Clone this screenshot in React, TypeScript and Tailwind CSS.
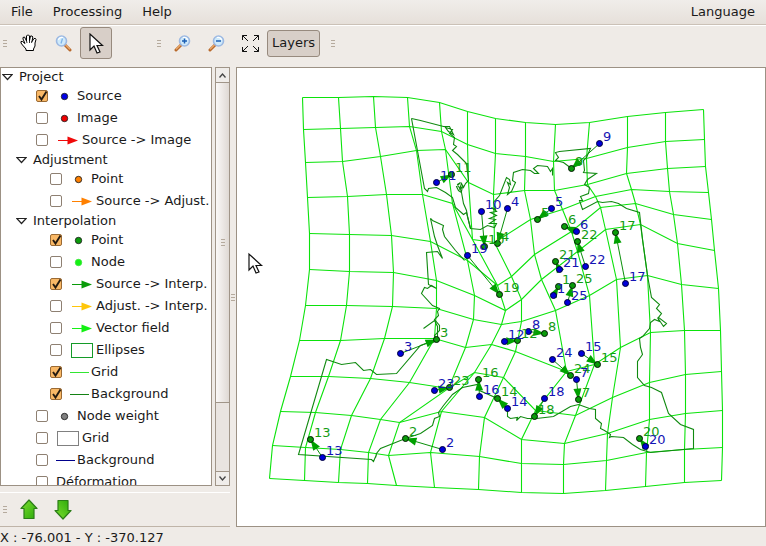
import React, { useId, useState } from "react";

type Pt = [number, number];

const GRID: Pt[][] = [
  [[302, 97], [338, 97], [373, 96], [407, 97], [439, 102], [467, 111], [495, 118], [525, 122], [555, 124], [589, 122], [627, 116], [665, 112], [703, 109]],
  [[303, 129], [340, 128], [375, 127], [409, 126], [441, 131], [467, 144], [495, 153], [525, 156], [553, 161], [586, 158], [627, 147], [665, 141], [704, 139]],
  [[305, 162], [342, 161], [380, 156], [416, 150], [445, 149], [468, 182], [493, 194], [524, 190], [554, 190], [587, 184], [626, 173], [667, 168], [705, 166]],
  [[307, 197], [347, 196], [386, 194], [422, 194], [452, 203], [472, 239], [494, 242], [530, 219], [562, 209], [595, 196], [631, 189], [669, 191], [708, 192]],
  [[309, 233], [349, 234], [391, 235], [430, 241], [467, 260], [497, 285], [511, 276], [534, 254], [571, 231], [600, 207], [635, 203], [673, 214], [711, 219]],
  [[309, 269], [349, 271], [393, 272], [436, 280], [474, 295], [505, 310], [521, 299], [541, 279], [577, 251], [605, 229], [640, 224], [677, 243], [714, 250]],
  [[305, 305], [346, 305], [392, 306], [436, 308], [473, 319], [501, 324], [521, 321], [555, 310], [589, 295], [616, 279], [647, 275], [681, 284], [718, 288]],
  [[299, 340], [340, 340], [384, 338], [434, 338], [465, 347], [491, 344], [515, 351], [566, 371], [594, 364], [620, 347], [650, 332], [684, 330], [720, 330]],
  [[290, 376], [328, 376], [370, 378], [409, 382], [448, 388], [474, 372], [503, 377], [535, 410], [575, 415], [612, 397], [649, 382], [685, 374], [721, 371]],
  [[280, 411], [315, 412], [351, 415], [380, 419], [399, 422], [441, 411], [484, 417], [521, 439], [564, 443], [607, 433], [649, 419], [685, 413], [722, 410]],
  [[272, 445], [305, 447], [340, 449], [368, 452], [388, 455], [430, 452], [479, 456], [521, 463], [563, 464], [606, 460], [646, 452], [684, 449], [722, 447]],
  [[269, 478], [304, 480], [338, 482], [367, 483], [396, 485], [434, 487], [478, 489], [521, 492], [563, 493], [605, 490], [645, 486], [684, 482], [721, 480]],
];

const BORDERS = [
  "411,118 420,120 443,126 449,126 453,134 448,131 445,127 452,129 449,133 454,137 453,144 456,146 452,150 457,154 464,161 466,163 468,180 465,183 463,187 461,183 459,189 462,186 461,191 457,184 460,182 456,186 458,190 461,192 463,203 466,210 467,216 470,228 480,229 487,225 494,227 496,223 489,223 495,219 489,218 496,215 490,212 496,211 491,207 495,209 493,202 499,195 506,177 509,179 510,184 507,182 509,187 507,194 511,191 515,182 512,180 513,172 522,169 530,170 534,173 538,173 533,168 537,165 547,166 550,171 552,168 552,175",
  "411,118 424,188 427,191 428,188 436,187 445,192 452,197 455,207 463,214 466,212 470,228",
  "430,218 432,220 443,225 442,229 444,236 455,250 464,260",
  "571,168 563,162 555,160 558,157 556,154 555,152 559,151 590,148 586,157 583,160 584,170 583,172 596,173 587,179 584,184 589,187 588,193 580,196 582,200 579,200 582,209 597,201 602,202 611,201 618,203 626,208 639,212 642,239 647,275 651,297 659,304 656,308 661,313 658,317 666,323 663,326 657,317 659,321 654,319 650,322 649,328 642,336 639,338 640,347 642,354 637,361 637,377 644,385 651,387 661,392 668,413 680,424 693,429 693,448 650,452 640,449 632,444 623,437 611,436 609,437 610,434 607,432 604,430 600,428 601,423 595,418 595,409 589,408 578,404 570,406 553,416 536,418 527,418 520,416 516,420 517,417 510,418 507,416 507,409 501,403 497,398 479,390 477,384 462,387 452,394 443,405 438,412 439,416 434,418 432,425 420,433 405,438 390,444 380,448 376,453 375,457 376,454 373,461 371,459 298,454 326,359 341,364 355,362 363,370 370,369 376,374 396,373 420,345 436,339 434,335 439,330 439,325 434,319 438,315 437,311 439,308 432,305 421,293 424,287 427,288 431,285 436,288 428,284 426,252 437,251 442,258 437,245 434,236 430,218",
  "423,328 434,320 437,326 437,340 430,343",
];

// Survey points: label, source position, interpolated position.
const POINTS: { n: number; src: Pt; itp: Pt }[] = [
  { n: 1, src: [553, 295], itp: [558, 286] },
  { n: 2, src: [442, 449], itp: [405, 438] },
  { n: 3, src: [400, 353], itp: [436, 339] },
  { n: 4, src: [507, 208], itp: [497, 243] },
  { n: 5, src: [551, 208], itp: [537, 219] },
  { n: 6, src: [576, 231], itp: [564, 226] },
  { n: 7, src: [576, 379], itp: [578, 399] },
  { n: 8, src: [528, 331], itp: [544, 333] },
  { n: 9, src: [599, 143], itp: [571, 168] },
  { n: 10, src: [481, 211], itp: [484, 246] },
  { n: 11, src: [436, 182], itp: [451, 174] },
  { n: 12, src: [504, 341], itp: [517, 340] },
  { n: 13, src: [322, 457], itp: [310, 439] },
  { n: 14, src: [507, 408], itp: [497, 398] },
  { n: 15, src: [581, 353], itp: [597, 364] },
  { n: 16, src: [479, 396], itp: [478, 379] },
  { n: 17, src: [625, 283], itp: [615, 232] },
  { n: 18, src: [544, 398], itp: [534, 416] },
  { n: 19, src: [467, 255], itp: [499, 294] },
  { n: 20, src: [645, 446], itp: [639, 438] },
  { n: 21, src: [559, 269], itp: [555, 261] },
  { n: 22, src: [585, 266], itp: [577, 241] },
  { n: 23, src: [434, 390], itp: [449, 387] },
  { n: 24, src: [552, 359], itp: [570, 375] },
  { n: 25, src: [567, 302], itp: [572, 285] },
];

function join(points: Pt[]) {
  return points.map((p) => p.join(",")).join(" ");
}

function arrowHead(from: Pt, to: Pt) {
  const dx = to[0] - from[0];
  const dy = to[1] - from[1];
  const len = Math.hypot(dx, dy);
  const ux = dx / len;
  const uy = dy / len;
  const bx = to[0] - ux * 11;
  const by = to[1] - uy * 11;
  return `${to[0]},${to[1]} ${bx - uy * 4},${by + ux * 4} ${bx + uy * 4},${by - ux * 4}`;
}

function Pointer() {
  return (
    <path
      d="M1 1V17L5 13L8 20L11 19L8 12.500H13.500Z"
      fill="#fff"
      stroke="#111"
      strokeWidth="1.2"
    />
  );
}

function MapView() {
  return (
    <svg
      role="img"
      aria-label="Displacement grid"
      viewBox="237 68 528 458"
      preserveAspectRatio="xMinYMin meet"
      className="block h-full w-full font-['DejaVu_Sans',sans-serif] text-[13px]"
    >
      <g transform="translate(0.5 0.5)">
        <g fill="none" stroke="#0be30b" strokeWidth="1.1">
          {GRID.map((row, i) => (
            <polyline key={i} points={join(row)} />
          ))}
          {GRID[0].map((_, c) => (
            <polyline key={c} points={join(GRID.map((row) => row[c]))} />
          ))}
        </g>
        <g fill="none" stroke="#108a10" strokeWidth="1.1">
          {BORDERS.map((b) => (
            <polyline key={b} points={b} />
          ))}
        </g>
        {POINTS.map(({ n, src, itp }) => (
          <g key={n} stroke="#0a900a" fill="#00a000">
            <line x1={src[0]} y1={src[1]} x2={itp[0]} y2={itp[1]} />
            <polygon points={arrowHead(src, itp)} stroke="none" />
          </g>
        ))}
        {POINTS.map(({ n, itp }) => (
          <circle key={n} cx={itp[0]} cy={itp[1]} r="3" fill="#0a9b0a" stroke="#031803" />
        ))}
        {POINTS.map(({ n, src }) => (
          <circle key={n} cx={src[0]} cy={src[1]} r="3" fill="#0000d8" stroke="#00003c" />
        ))}
      </g>
      {POINTS.map(({ n, itp }) => (
        <text key={n} x={itp[0] + 4} y={itp[1] - 2} fill="#149c14">{n}</text>
      ))}
      {POINTS.map(({ n, src }) => (
        <text key={n} x={src[0] + 4} y={src[1] - 2} fill="#1414b4">{n}</text>
      ))}
      <g transform="translate(248 253)">
        <Pointer />
      </g>
    </svg>
  );
}

type SymbolKind = "dot" | "arrow" | "box" | "line" | "none";

function LayerSymbol({ kind, color }: { kind: SymbolKind; color: string }) {
  if (kind === "none") return null;
  const wide = kind === "arrow" || kind === "box";
  return (
    <svg width={wide ? 26 : 21} height="16" className="shrink-0" aria-hidden="true">
      {kind === "dot" && (
        <circle cx="8.500" cy="8.500" r="3.200" fill={color} stroke={color === "#14f014" ? "#3be83b" : "#222"} strokeWidth="0.9" />
      )}
      {kind === "arrow" && (
        <>
          <path d="M2 8.500H14" stroke={color} />
          <path d="M11.500 4.500L22 8.500L11.500 12.500Z" fill={color} />
        </>
      )}
      {kind === "box" && <rect x="1.500" y="1.500" width="21" height="14" fill="#fff" stroke={color} />}
      {kind === "line" && <path d="M0 8.500H19" stroke={color} />}
    </svg>
  );
}

type Row =
  | { type: "group"; label: string; level: 0 | 1 }
  | { type: "layer"; label: string; level: 1 | 2; kind: SymbolKind; color: string; on?: boolean };

const ROWS: Row[] = [
  { type: "group", label: "Project", level: 0 },
  { type: "layer", label: "Source", level: 1, kind: "dot", color: "#0000e6", on: true },
  { type: "layer", label: "Image", level: 1, kind: "dot", color: "#f00000" },
  { type: "layer", label: "Source -> Image", level: 1, kind: "arrow", color: "#f00a0a" },
  { type: "group", label: "Adjustment", level: 1 },
  { type: "layer", label: "Point", level: 2, kind: "dot", color: "#ff8000" },
  { type: "layer", label: "Source -> Adjust.", level: 2, kind: "arrow", color: "#ff8000" },
  { type: "group", label: "Interpolation", level: 1 },
  { type: "layer", label: "Point", level: 2, kind: "dot", color: "#0a9b0a", on: true },
  { type: "layer", label: "Node", level: 2, kind: "dot", color: "#14f014" },
  { type: "layer", label: "Source -> Interp.", level: 2, kind: "arrow", color: "#0a9b0a", on: true },
  { type: "layer", label: "Adjust. -> Interp.", level: 2, kind: "arrow", color: "#ffc60a" },
  { type: "layer", label: "Vector field", level: 2, kind: "arrow", color: "#14f014" },
  { type: "layer", label: "Ellipses", level: 2, kind: "box", color: "#149b28" },
  { type: "layer", label: "Grid", level: 2, kind: "line", color: "#32e632", on: true },
  { type: "layer", label: "Background", level: 2, kind: "line", color: "#148214", on: true },
  { type: "layer", label: "Node weight", level: 1, kind: "dot", color: "#808080" },
  { type: "layer", label: "Grid", level: 1, kind: "box", color: "#808080" },
  { type: "layer", label: "Background", level: 1, kind: "line", color: "#00008c" },
  { type: "layer", label: "Déformation", level: 1, kind: "none", color: "" },
];

function LayerRow({ row }: { row: Extract<Row, { type: "layer" }> }) {
  const id = useId();
  const [on, setOn] = useState(!!row.on);
  return (
    <li className={`flex h-[22px] items-center ${row.level === 1 ? "pl-[35px]" : "pl-[49px]"}`}>
      <span className="mr-2 grid size-3 shrink-0">
        <input
          id={id}
          type="checkbox"
          checked={on}
          onChange={() => setOn(!on)}
          className="col-start-1 row-start-1 size-3 appearance-none rounded-[2px] border border-[#8e8072] bg-white checked:border-[#9a6a34] checked:bg-[#f9b866]"
        />
        {on && (
          <svg viewBox="0 0 12 12" className="pointer-events-none col-start-1 row-start-1 size-3 overflow-visible" aria-hidden="true">
            <path d="M3 6L5.500 9.500L10.500 1.500" fill="none" stroke="#241a10" strokeWidth="1.9" />
          </svg>
        )}
      </span>
      <LayerSymbol kind={row.kind} color={row.color} />
      <label htmlFor={id} className="whitespace-nowrap">{row.label}</label>
    </li>
  );
}

function GroupRow({ row }: { row: Extract<Row, { type: "group" }> }) {
  return (
    <li className={`flex h-[17px] items-center ${row.level === 0 ? "pl-px" : "pl-[15px]"}`}>
      <button type="button" className="flex items-center gap-[6px]">
        <svg width="11" height="8" aria-hidden="true">
          <path d="M0.800 1.500H10.200L5.500 6.500Z" fill="#fff" stroke="#222" strokeWidth="1.200" />
        </svg>
        {row.label}
      </button>
    </li>
  );
}

function Grip() {
  return (
    <span className="flex w-1 flex-col gap-[2px]" aria-hidden="true">
      <span className="h-px bg-[#b5aa9d]" />
      <span className="h-px bg-[#b5aa9d]" />
      <span className="h-px bg-[#b5aa9d]" />
    </span>
  );
}

function Magnifier({ mark, flip }: { mark: React.ReactNode; flip?: boolean }) {
  return (
    <svg width="17" height="17" viewBox="0 0 17 17" aria-hidden="true">
      <g transform={flip ? "translate(17 0) scale(-1 1)" : undefined}>
        <path d="M10 10L15 15" stroke="#b8692c" strokeWidth="3" strokeLinecap="round" />
        <path d="M10.500 9.800L15 14.300" stroke="#f0b070" strokeWidth="1.200" />
        <circle cx="6.500" cy="6" r="5" fill="#cfeafb" stroke="#9db9e2" strokeWidth="1.600" />
        <path d="M3.500 5A3.500 3.500 0 0 1 8 2.500" stroke="#fff" strokeWidth="1.200" fill="none" />
      </g>
      {mark}
    </svg>
  );
}

function ToolButton({ label, children }: { label: string; children: React.ReactNode }) {
  return (
    <button type="button" aria-label={label} className="flex h-8 w-[34px] items-center justify-center">
      {children}
    </button>
  );
}

function Hand() {
  return (
    <svg width="18" height="18" viewBox="0 0 18 18" aria-hidden="true">
      <path
        d="M6 16.500V15L2.500 11L1 9V7.500H2.500L5 9.500L3 5V3.500L4.500 3L6.500 7V2L7.500 1H8.500L9.500 2V6.500L10.500 2H12L12.800 3L12 7.500L14 4.500H15.500L16 5.500L15 9V12L13.500 15V16.500Z"
        fill="#fff"
        stroke="#000"
        strokeWidth="1"
      />
      <path d="M6.500 7L7 9M9.500 6V9M12 7L11.500 9" stroke="#000" strokeWidth="0.800" fill="none" />
    </svg>
  );
}

function BigArrow({ down }: { down?: boolean }) {
  return (
    <svg width="18" height="21" viewBox="0 0 18 21" aria-hidden="true">
      <defs>
        <linearGradient id={down ? "gd" : "gu"} x1="0" y1="0" x2="1" y2="1">
          <stop offset="0" stopColor="#7fe030" />
          <stop offset="1" stopColor="#2aa80a" />
        </linearGradient>
      </defs>
      <path
        d="M9 1L17 9.500H14V19.500H4V9.500H1Z"
        transform={down ? "translate(0 21) scale(1 -1)" : undefined}
        fill={down ? "url(#gd)" : "url(#gu)"}
        stroke="#2b7d18"
        strokeWidth="1.200"
        strokeLinejoin="round"
      />
    </svg>
  );
}

function Scrollbar() {
  return (
    <div className="flex w-[15px] flex-col border border-[#a09588] bg-[#e9e4e0]">
      <button type="button" aria-label="Scroll up" className="flex h-[15px] items-center justify-center border-b border-[#a09588] bg-[#f0edea]">
        <svg width="7" height="5"><path d="M0.500 4.500L3.500 1L6.500 4.500" fill="none" stroke="#444" strokeWidth="1.300" /></svg>
      </button>
      <div className="flex flex-[318] items-center justify-center border-b border-[#a09588] bg-linear-to-r from-[#faf8f7] to-[#dfd9d4]">
        <Grip />
      </div>
      <div className="flex-[68]" />
      <button type="button" aria-label="Scroll down" className="flex h-[14px] items-center justify-center border-t border-[#a09588] bg-[#f0edea]">
        <svg width="7" height="5"><path d="M0.500 0.500L3.500 4L6.500 0.500" fill="none" stroke="#444" strokeWidth="1.300" /></svg>
      </button>
    </div>
  );
}

export default function App() {
  return (
    <div className="flex h-screen flex-col overflow-hidden bg-[#efebe7] font-['DejaVu_Sans',sans-serif] text-[13px] leading-4 text-[#1a1a1a]">
      <nav className="flex h-[25px] shrink-0 items-center gap-5 border-b border-[#cbc1b7] bg-linear-to-b from-[#f0edea] to-[#e6e0da] px-[11px]">
        <button type="button">File</button>
        <button type="button">Processing</button>
        <button type="button">Help</button>
        <button type="button" className="ml-auto">Language</button>
      </nav>

      <div className="flex h-[42px] shrink-0 items-start border-t border-white pl-[3px]">
        <div className="flex h-[34px] items-center">
          <Grip />
          <span className="w-[5px]" />
          <ToolButton label="Pan"><Hand /></ToolButton>
          <ToolButton label="Zoom to area">
            <Magnifier mark={<path d="M7.500 3.500L6 8.500" stroke="#7fb4e8" strokeWidth="1.300" />} />
          </ToolButton>
          <button type="button" aria-label="Select" aria-pressed="true" className="flex h-8 w-8 items-center justify-center rounded-[3px] border border-[#978a7e] bg-[#d8cfc8]">
            <svg width="15" height="21" aria-hidden="true"><Pointer /></svg>
          </button>
        </div>
        <div className="ml-[45px] flex h-[34px] items-center">
          <Grip />
          <span className="w-1" />
          <ToolButton label="Zoom in">
            <Magnifier flip mark={<path d="M10.500 3.500V8.500M8 6H13" stroke="#1c5fb4" strokeWidth="1.500" />} />
          </ToolButton>
          <ToolButton label="Zoom out">
            <Magnifier flip mark={<path d="M8 6H13" stroke="#1c5fb4" strokeWidth="1.500" />} />
          </ToolButton>
          <ToolButton label="Fit to window">
            <svg width="17" height="17" fill="none" stroke="#111" strokeWidth="1" aria-hidden="true">
              <path d="M0.500 5V0.500H5M0.500 0.500L6 6M12 0.500H16.500V5M16.500 0.500L11 6M0.500 12V16.500H5M0.500 16.500L6 11M16.500 12V16.500H12M16.500 16.500L11 11" />
            </svg>
          </ToolButton>
          <button type="button" aria-pressed="true" className="mr-[11px] h-[27px] rounded-[3px] border border-[#978a7e] bg-[#d8cfc8] px-1">
            Layers
          </button>
          <Grip />
        </div>
      </div>

      <div className="flex min-h-0 flex-1">
        <div className="flex w-[236px] shrink-0">
          <aside className="flex w-[230px] flex-col">
            <div className="flex min-h-0 flex-1 justify-between">
              <ul className="w-[212px] overflow-hidden border border-[#9c9184] bg-white">
                {ROWS.map((row, i) =>
                  row.type === "group" ? <GroupRow key={i} row={row} /> : <LayerRow key={i} row={row} />
                )}
              </ul>
              <Scrollbar />
            </div>
            <div className="mt-[6px] flex h-[35px] shrink-0 items-center border-t border-b border-t-white border-b-[#bfb4a8] pl-[3px]">
              <Grip />
              <span className="w-[5px]" />
              <ToolButton label="Move up"><BigArrow /></ToolButton>
              <ToolButton label="Move down"><BigArrow down /></ToolButton>
            </div>
          </aside>
          <div className="flex flex-1 items-center justify-center"><Grip /></div>
        </div>
        <main className="min-w-0 flex-1 border border-[#9c9184] bg-white">
          <MapView />
        </main>
      </div>

      <footer className="flex h-[19px] shrink-0 items-center pt-[3px]">X : -76.001 - Y : -370.127</footer>
    </div>
  );
}
